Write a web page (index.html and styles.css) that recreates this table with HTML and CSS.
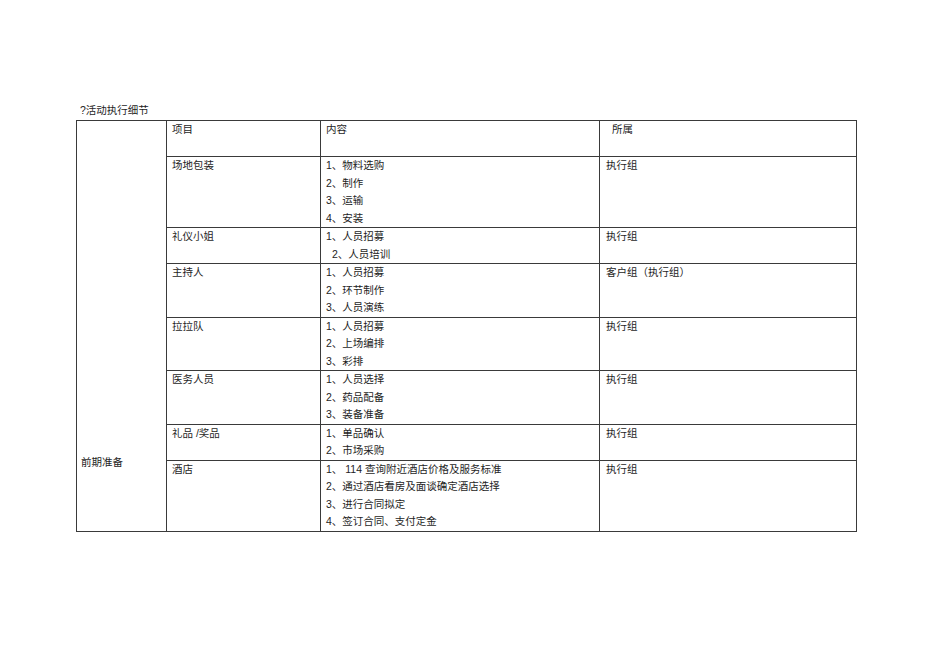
FILE: index.html
```html
<!DOCTYPE html>
<html lang="zh">
<head>
<meta charset="utf-8">
<title>活动执行细节</title>
<link rel="stylesheet" href="styles.css">
</head>
<body>
<div class="page">
  <div class="title">?活动执行细节</div>
  <table class="plan">
    <colgroup>
      <col class="c1"><col class="c2"><col class="c3"><col class="c4">
    </colgroup>
    <tbody>
      <tr>
        <td class="phase" rowspan="8"><span class="phase-text">前期准备</span></td>
        <td><div class="ln">项目</div><div class="ln">&nbsp;</div></td>
        <td><div class="ln">内容</div><div class="ln">&nbsp;</div></td>
        <td><div class="ln indent">所属</div><div class="ln">&nbsp;</div></td>
      </tr>
      <tr>
        <td><div class="ln">场地包装</div></td>
        <td><div class="ln">1、物料选购</div><div class="ln">2、制作</div><div class="ln">3、运输</div><div class="ln">4、安装</div></td>
        <td><div class="ln">执行组</div></td>
      </tr>
      <tr>
        <td><div class="ln">礼仪小姐</div></td>
        <td><div class="ln">1、人员招募</div><div class="ln indent">2、人员培训</div></td>
        <td><div class="ln">执行组</div></td>
      </tr>
      <tr>
        <td><div class="ln">主持人</div></td>
        <td><div class="ln">1、人员招募</div><div class="ln">2、环节制作</div><div class="ln">3、人员演练</div></td>
        <td><div class="ln">客户组（执行组）</div></td>
      </tr>
      <tr>
        <td><div class="ln">拉拉队</div></td>
        <td><div class="ln">1、人员招募</div><div class="ln">2、上场编排</div><div class="ln">3、彩排</div></td>
        <td><div class="ln">执行组</div></td>
      </tr>
      <tr>
        <td><div class="ln">医务人员</div></td>
        <td><div class="ln">1、人员选择</div><div class="ln">2、药品配备</div><div class="ln">3、装备准备</div></td>
        <td><div class="ln">执行组</div></td>
      </tr>
      <tr>
        <td><div class="ln">礼品 /奖品</div></td>
        <td><div class="ln">1、单品确认</div><div class="ln">2、市场采购</div></td>
        <td><div class="ln">执行组</div></td>
      </tr>
      <tr>
        <td><div class="ln">酒店</div></td>
        <td><div class="ln">1、 114 查询附近酒店价格及服务标准</div><div class="ln">2、通过酒店看房及面谈确定酒店选择</div><div class="ln">3、进行合同拟定</div><div class="ln">4、签订合同、支付定金</div></td>
        <td><div class="ln">执行组</div></td>
      </tr>
    </tbody>
  </table>
</div>
</body>
</html>
```
FILE: styles.css
```css
html, body {
  margin: 0;
  padding: 0;
  background: #ffffff;
}
body {
  font-family: "Liberation Sans", "Noto Sans CJK SC", sans-serif;
  font-size: 10.5px;
  color: #1e1e1e;
}
.page {
  padding: 102px 0 0 76px;
}
.title {
  padding-left: 4px;
  line-height: 16px;
  height: 18px;
}
.plan {
  border-collapse: collapse;
  table-layout: fixed;
  width: 780px;
}
.c1 { width: 90px; }
.c2 { width: 154px; }
.c3 { width: 279px; }
.c4 { width: 257px; }
.plan td {
  border: 1px solid #3a3a3a;
  vertical-align: top;
  padding: 0 4px 0 5px;
  white-space: nowrap;
}
.plan td:last-child {
  padding-left: 6px;
}
.ln {
  line-height: 17.5px;
}
.indent {
  padding-left: 6px;
}
.plan td.phase {
  vertical-align: bottom;
  padding: 0 0 59px 4px;
}
.phase-text {
  line-height: 17.5px;
}
```
